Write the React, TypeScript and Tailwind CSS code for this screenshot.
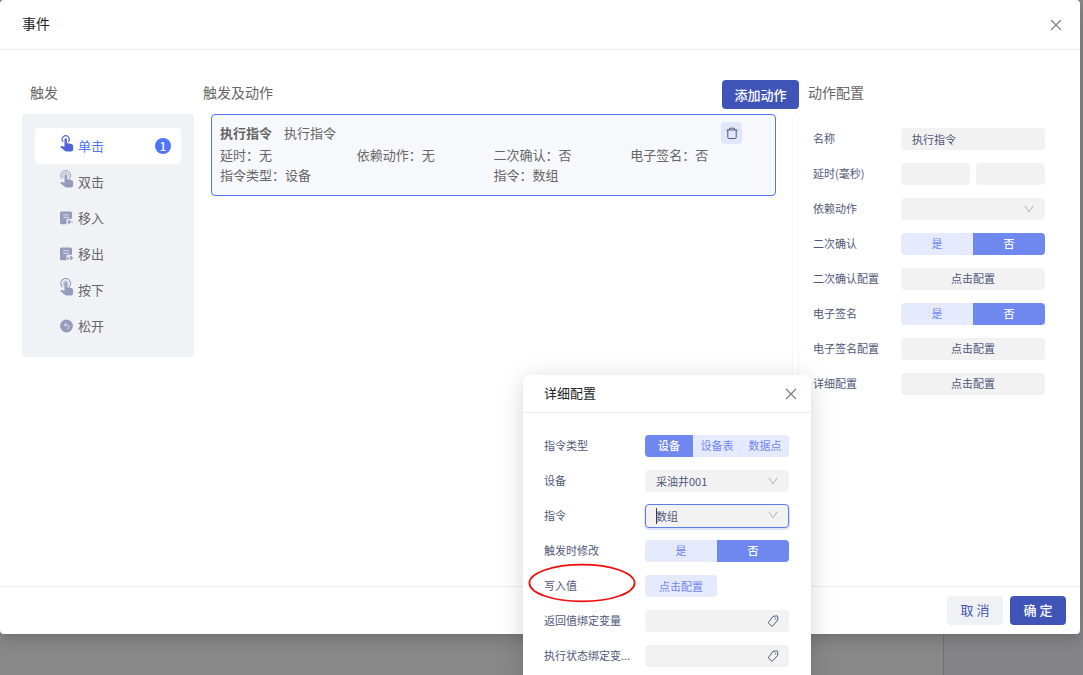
import React from "react";

const fieldClass =
  "h-[22px] w-full min-w-0 rounded bg-[#f2f2f2] text-[11px] text-[#50577a] outline-none";

const details = [
  { label: "延时", value: "无", className: "" },
  { label: "依赖动作", value: "无", className: "" },
  { label: "二次确认", value: "否", className: "" },
  { label: "电子签名", value: "否", className: "" },
  { label: "指令类型", value: "设备", className: "col-span-2" },
  { label: "指令", value: "数组", className: "col-span-2" },
];

const triggers = [
  { name: "单击", icon: <HandIcon rings={1} />, count: 1 },
  { name: "双击", icon: <HandIcon rings={2} /> },
  { name: "移入", icon: <NoteIcon direction="in" /> },
  { name: "移出", icon: <NoteIcon direction="out" /> },
  { name: "按下", icon: <HandIcon rings={1} pressed /> },
  { name: "松开", icon: <ReleaseIcon /> },
];

function HandIcon({ rings, pressed }: { rings: number; pressed?: boolean }) {
  return (
    <svg width="14" height="18" viewBox="0 0 14 18" fill="none" className="mb-1.5">
      {rings === 1 && !pressed && (
        <path d="M3.2 7.8a3.5 3.5 0 1 1 5 0" stroke="currentColor" strokeWidth="1.2" />
      )}
      {rings === 2 && (
        <>
          <path d="M2.6 9.2a4.9 4.9 0 1 1 6.2 0" stroke="currentColor" strokeWidth="1" />
          <path d="M3.8 7.4a2.8 2.8 0 1 1 3.8 0" stroke="currentColor" strokeWidth="0.9" />
        </>
      )}
      {pressed && (
        <>
          <path d="M2.6 9.2a4.9 4.9 0 1 1 6.2 0" stroke="currentColor" strokeWidth="1.1" />
          <circle cx="5.7" cy="5.4" r="2.9" fill="currentColor" opacity="0.5" />
        </>
      )}
      <path
        d="M4.5 5.4a1.2 1.2 0 0 1 2.4 0v3.7l4.5.8c1.1.2 1.7.9 1.7 1.9v3.5c0 1.3-.8 2.2-2 2.2H6.7c-.8 0-1.4-.2-1.9-.7L.2 12.9c.7-.9 1.6-1.2 2.6-.7l1.7.6z"
        fill="currentColor"
      />
    </svg>
  );
}

function NoteIcon({ direction }: { direction: "in" | "out" }) {
  return (
    <svg width="14" height="14" viewBox="0 0 14 14" fill="none">
      <path
        d="M1.5 0.5h9A1.5 1.5 0 0 1 12 2v5.8H8.6c-1.4 0-2.2.8-2.2 2.2v3.3H1.5A1.5 1.5 0 0 1 0 11.8V2A1.5 1.5 0 0 1 1.5.5z"
        fill="currentColor"
      />
      <path d="M3.2 3.8h5.6M3.2 6.4h5.6" stroke="#dfe1eb" strokeWidth="1" />
      {direction === "in" ? (
        <path d="M12.8 11H8M10 9l-2.1 2 2.1 2" stroke="currentColor" strokeWidth="1.1" />
      ) : (
        <path d="M7.6 13v-2h4.8M10.4 9l2.1 2-2.1 2" stroke="currentColor" strokeWidth="1.1" />
      )}
    </svg>
  );
}

function ReleaseIcon() {
  return (
    <svg width="14" height="14" viewBox="0 0 14 14" fill="none">
      <circle cx="6.5" cy="7" r="6.4" fill="currentColor" />
      <path d="M6.3 4 4.4 5.9l1.9 1.8M4.6 5.9h2.2c1.4 0 2.1.7 2.1 1.9s-.7 2-2 2.1" stroke="#e4e6ef" strokeWidth="1" />
    </svg>
  );
}

function CloseIcon() {
  return (
    <svg width="12" height="12" viewBox="0 0 12 12" fill="none" stroke="#808080" strokeWidth="1.2">
      <path d="M1 1l10 10M11 1L1 11" />
    </svg>
  );
}

function TrashIcon() {
  return (
    <svg width="12" height="12" viewBox="0 0 12 12" fill="none" stroke="#555b66" strokeWidth="1">
      <path d="M0.5 3h11M3 3l.6-1.8h4.8L9 3M1.8 3v7.5c0 .6.4 1 1 1h6.4c.6 0 1-.4 1-1V3" />
    </svg>
  );
}

function TagIcon() {
  return (
    <svg width="12" height="12" viewBox="0 0 12 12" fill="none" stroke="#50577a" strokeWidth="1">
      <path d="M6 1.3 10.1.9l.7.6-.2 4-5.5 5.9-3.9-3.6z" strokeLinejoin="round" />
      <path d="M7.6 2.9l1.6 1.4" />
    </svg>
  );
}

type RowProps = {
  label: string;
  id: string;
  labelWidth: string;
  children: React.ReactNode;
};

function Row({ label, id, labelWidth, children }: RowProps) {
  return (
    <div className="flex h-[22px] items-center">
      <label
        id={`${id}-label`}
        htmlFor={id}
        className={`${labelWidth} shrink-0 whitespace-nowrap pb-px text-[11px] text-[#50577a]`}
      >
        {label}
      </label>
      <div className="flex w-36 gap-1.5">{children}</div>
    </div>
  );
}

function Segmented({ id, options, active }: { id: string; options: string[]; active: string }) {
  return (
    <div
      id={id}
      role="group"
      aria-labelledby={`${id}-label`}
      className="flex h-[22px] w-full overflow-hidden rounded bg-[#e5eafe]"
    >
      {options.map((option) => (
        <button
          key={option}
          type="button"
          aria-pressed={option === active}
          className={
            option === active
              ? "flex-1 bg-[#6f88f0] pb-px text-[11px] font-medium text-white"
              : "flex-1 pb-px text-[11px] text-[#6f88f0]"
          }
        >
          {option}
        </button>
      ))}
    </div>
  );
}

function Select({ id, value, focused }: { id: string; value: string; focused?: boolean }) {
  return (
    <div className="relative w-full">
      <select
        id={id}
        defaultValue={value}
        className={
          focused
            ? "block h-6 w-full appearance-none rounded border border-[#5f7ce0] bg-[#f2f2f2] pl-2.5 text-[11px] text-[#50577a] shadow-[0_1px_0_1px_#dde4fb] outline-none"
            : "block h-[22px] w-full appearance-none rounded bg-[#f2f2f2] pl-[11px] text-[11px] text-[#50577a] outline-none"
        }
      >
        <option value={value}>{value}</option>
      </select>
      {focused && <span className="absolute left-[11px] top-1 h-4 w-px bg-[#333a5c]" />}
      <svg
        width="10"
        height="8"
        viewBox="0 0 10 8"
        fill="none"
        stroke="#b0b0b0"
        className="pointer-events-none absolute right-[11px] top-[7px]"
      >
        <path d="M0.8 0.8 5 6.8l4.2-6" />
      </svg>
    </div>
  );
}

function ConfigButton({ id }: { id: string }) {
  return (
    <button id={id} type="button" className={`${fieldClass} pb-px`}>
      点击配置
    </button>
  );
}

function VariableInput({ id }: { id: string }) {
  return (
    <div className="relative w-full">
      <input id={id} type="text" className={`${fieldClass} block pl-[11px] pr-8`} />
      <button type="button" aria-label="选择变量" className="absolute right-2.5 top-[5px]">
        <TagIcon />
      </button>
    </div>
  );
}

function TriggerList() {
  return (
    <section className="w-[172px] shrink-0">
      <h2 className="flex h-6 items-center pl-2 text-sm text-[#666666]">触发</h2>
      <ul className="mt-2.5 rounded bg-[#f1f2f6] px-[13px] pb-[13px] pt-3.5">
        {triggers.map((trigger) => (
          <li key={trigger.name}>
            <button
              type="button"
              className={
                trigger.count
                  ? "flex h-9 w-full items-center rounded bg-white pl-[25px] pr-2.5 text-[13px] text-[#4f74ff]"
                  : "flex h-9 w-full items-center pl-[25px] pr-2.5 text-[13px] text-[#666666]"
              }
            >
              <span className={trigger.count ? "text-[#5264dc]" : "text-[#949bbd]"}>
                {trigger.icon}
              </span>
              <span className="ml-1">{trigger.name}</span>
              {trigger.count && (
                <span className="ml-auto flex size-4 items-center justify-center rounded-full bg-[#4f74ff] text-xs font-medium text-white">
                  {trigger.count}
                </span>
              )}
            </button>
          </li>
        ))}
      </ul>
    </section>
  );
}

function ActionList() {
  return (
    <section className="ml-[9px] flex min-w-0 flex-1 flex-col">
      <div className="flex h-[29px] items-start justify-between">
        <h2 className="flex h-6 items-center text-sm text-[#666666]">触发及动作</h2>
        <button type="button" className="h-[29px] w-[77px] rounded-sm bg-[#4054b8] text-[13px] font-medium text-white">
          添加动作
        </button>
      </div>
      <div className="mt-[5px] flex flex-1 items-start justify-between pl-2">
        <div className="mr-4 flex-1 rounded border border-[#4f74ff] bg-[#f7f8fc] px-2 pb-2.5 pt-1.5 text-[13px] text-[#666666]">
          <div className="flex h-6 items-center">
            <span className="font-bold">执行指令</span>
            <span className="ml-3">执行指令</span>
            <button
              type="button"
              aria-label="删除"
              className="ml-auto mr-[25px] flex h-[22px] w-[21px] items-center justify-center rounded-sm bg-[#e0e6fc]"
            >
              <TrashIcon />
            </button>
          </div>
          <div className="grid grid-cols-4 leading-5">
            {details.map((detail) => (
              <span key={detail.label} className={detail.className}>
                {detail.label}：{detail.value}
              </span>
            ))}
          </div>
        </div>
        <div className="w-[7px] self-stretch rounded border-x border-t border-[#f7f7f7]" />
      </div>
    </section>
  );
}

function ActionConfig() {
  return (
    <section className="ml-[9px] w-[272px] shrink-0">
      <h2 className="flex h-6 items-center text-sm text-[#666666]">动作配置</h2>
      <div className="mt-6 flex flex-col gap-[13px] pl-[5px]">
        <Row label="名称" id="name" labelWidth="w-[88px]">
          <input id="name" type="text" defaultValue="执行指令" className={`${fieldClass} px-[11px] pb-px`} />
        </Row>
        <Row label="延时(毫秒)" id="delay" labelWidth="w-[88px]">
          <input id="delay" type="text" className={fieldClass} />
          <input type="text" aria-label="延时上限" className={fieldClass} />
        </Row>
        <Row label="依赖动作" id="depends" labelWidth="w-[88px]">
          <Select id="depends" value="" />
        </Row>
        <Row label="二次确认" id="confirm" labelWidth="w-[88px]">
          <Segmented id="confirm" options={["是", "否"]} active="否" />
        </Row>
        <Row label="二次确认配置" id="confirm-config" labelWidth="w-[88px]">
          <ConfigButton id="confirm-config" />
        </Row>
        <Row label="电子签名" id="sign" labelWidth="w-[88px]">
          <Segmented id="sign" options={["是", "否"]} active="否" />
        </Row>
        <Row label="电子签名配置" id="sign-config" labelWidth="w-[88px]">
          <ConfigButton id="sign-config" />
        </Row>
        <Row label="详细配置" id="detail-config" labelWidth="w-[88px]">
          <ConfigButton id="detail-config" />
        </Row>
      </div>
    </section>
  );
}

function DetailDialog() {
  return (
    <div
      role="dialog"
      aria-label="详细配置"
      className="absolute left-[523px] top-[375px] w-72 rounded-lg bg-white pb-6 shadow-[0_4px_24px_rgba(0,0,0,0.16)]"
    >
      <div className="flex h-[38px] items-center justify-between border-b border-[#ededed] pl-[21px] pr-3.5">
        <h2 className="pb-px text-[13px] text-[#222222]">详细配置</h2>
        <button type="button" aria-label="关闭">
          <CloseIcon />
        </button>
      </div>
      <div className="flex flex-col gap-[13px] pl-[21px] pt-[22px]">
        <Row label="指令类型" id="command-type" labelWidth="w-[101px]">
          <Segmented id="command-type" options={["设备", "设备表", "数据点"]} active="设备" />
        </Row>
        <Row label="设备" id="device" labelWidth="w-[101px]">
          <Select id="device" value="采油井001" />
        </Row>
        <Row label="指令" id="command" labelWidth="w-[101px]">
          <Select id="command" value="数组" focused />
        </Row>
        <Row label="触发时修改" id="modify" labelWidth="w-[101px]">
          <Segmented id="modify" options={["是", "否"]} active="否" />
        </Row>
        <Row label="写入值" id="write-value" labelWidth="w-[101px]">
          <button
            id="write-value"
            type="button"
            className="h-[22px] w-[72px] rounded bg-[#e5eafe] text-[11px] text-[#6f88f0]"
          >
            点击配置
          </button>
        </Row>
        <Row label="返回值绑定变量" id="return-variable" labelWidth="w-[101px]">
          <VariableInput id="return-variable" />
        </Row>
        <Row label="执行状态绑定变..." id="status-variable" labelWidth="w-[101px]">
          <VariableInput id="status-variable" />
        </Row>
      </div>
      <svg
        width="108"
        height="40"
        viewBox="0 0 108 40"
        fill="none"
        className="pointer-events-none absolute left-[5px] top-[188px]"
      >
        <ellipse cx="54" cy="20" rx="52.6" ry="18.4" stroke="#f20d0d" strokeWidth="1.8" />
      </svg>
    </div>
  );
}

function App() {
  return (
    <div className="relative flex h-screen flex-col overflow-hidden bg-[#888888] font-['Noto_Sans_CJK_SC',sans-serif]">
      <main className="z-10 mr-[3px] flex flex-1 flex-col rounded bg-white shadow-[0_4px_16px_rgba(0,0,0,0.2)]">
        <header className="flex h-[50px] items-center justify-between border-b border-[#ededed] pl-[22px] pr-[18px]">
          <h1 className="pb-1 text-sm text-[#222222]">事件</h1>
          <button type="button" aria-label="关闭">
            <CloseIcon />
          </button>
        </header>
        <div className="flex flex-1 pl-[22px] pt-[30px]">
          <TriggerList />
          <ActionList />
          <ActionConfig />
        </div>
        <footer className="flex h-12 items-center justify-end gap-[7px] border-t border-[#ededed] pr-3.5">
          <button type="button" className="h-[29px] w-14 rounded-sm bg-[#f0f1f4] pb-0.5 text-[13px] text-[#4054b8]">
            取 消
          </button>
          <button type="button" className="h-[29px] w-14 rounded-sm bg-[#4054b8] pb-0.5 text-[13px] font-medium text-white">
            确 定
          </button>
        </footer>
      </main>
      <div className="flex h-[41px]">
        <div className="flex-1" />
        <div className="w-[140px] border-l border-[#6f7073] bg-[#848487]" />
      </div>
      <div className="absolute inset-0 z-20">
        <DetailDialog />
      </div>
    </div>
  );
}

export default App;
